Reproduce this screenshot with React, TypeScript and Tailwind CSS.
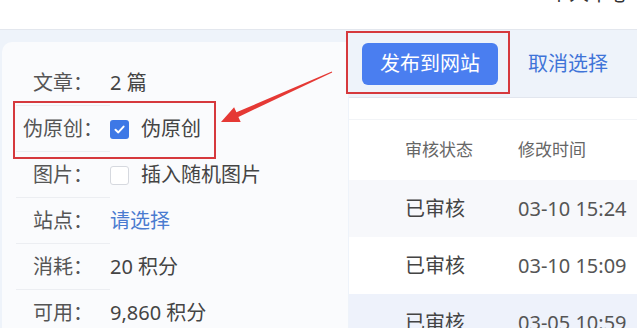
import React from "react";

const font = { fontFamily: '"Noto Sans", "Noto Sans CJK SC", sans-serif' };

function Row({ label, children }: { label: string; children: React.ReactNode }) {
  return (
    <div className="flex h-[46px] items-center">
      <div className="ml-[14px] w-[94px] h-full flex items-center justify-center border-b border-[#eceef2] text-[20px] text-[#555]">
        {label}
      </div>
      <div className="flex-1 h-full flex items-center text-[20px] text-[#444]">{children}</div>
    </div>
  );
}

const rows = [
  { status: "已审核", time: "03-10 15:24", bg: "bg-[#f7f8fb]" },
  { status: "已审核", time: "03-10 15:09", bg: "bg-white" },
  { status: "已审核", time: "03-05 10:59", bg: "bg-[#eef2fb]" },
];

export default function App() {
  return (
    <div className="w-[637px] h-[328px] overflow-hidden relative bg-[#eef3fa]" style={font}>
      {/* top bar */}
      <div className="h-[30px] bg-white border-b border-[#e3e7ee] flex justify-end pr-[8px]">
        <span className="text-[20px] leading-none text-[#333] -mt-[16px]">个人中心</span>
      </div>

      <div className="flex h-[298px]">
        {/* left side panel */}
        <div className="w-[348px] shrink-0 pl-[2px] pt-[12px]">
          <div className="h-full bg-[#fafbfd] rounded-tl-[10px] pt-[18px]">
            <Row label="文章：">2 篇</Row>
            <Row label="伪原创：">
              <span className="w-[19px] h-[19px] rounded-[3px] bg-[#3d78e6] flex items-center justify-center mr-[12px]">
                <svg width="13" height="13" viewBox="0 0 13 13">
                  <path d="M2.5 6.8 L5.3 9.4 L10.6 3.6" stroke="white" strokeWidth="2" fill="none" strokeLinecap="round" strokeLinejoin="round" />
                </svg>
              </span>
              伪原创
            </Row>
            <Row label="图片：">
              <span className="w-[19px] h-[19px] rounded-[3px] bg-white border border-[#d6d9df] mr-[12px]" />
              插入随机图片
            </Row>
            <Row label="站点：">
              <span className="text-[#4a7bd0]">请选择</span>
            </Row>
            <Row label="消耗：">20 积分</Row>
            <Row label="可用：">9,860 积分</Row>
          </div>
        </div>

        {/* right content */}
        <div className="flex-1 flex flex-col min-h-0">
          <div className="h-[67px] shrink-0 flex items-center pl-[14px] gap-[30px]">
            <button className="w-[136px] h-[42px] rounded-[6px] bg-[#4a7ef0] text-white text-[20px]">发布到网站</button>
            <span className="text-[20px] text-[#3f74d8]">取消选择</span>
          </div>
          <div className="flex-1 min-h-0 overflow-hidden bg-white border-t border-[#e2e6ee] ml-px">
            <div className="h-[22px] border-b border-[#f2f4f7]" />
            <div className="h-[60px] flex items-center pl-[56px] text-[17px] text-[#666]">
              <span className="w-[113px]">审核状态</span>
              <span>修改时间</span>
            </div>
            {rows.map((r, i) => (
              <div key={i} className={`h-[57px] flex items-center pl-[56px] text-[20px] ${r.bg}`}>
                <span className="w-[113px] text-[#444]">{r.status}</span>
                <span className="text-[#555] whitespace-nowrap">{r.time}</span>
              </div>
            ))}
          </div>
        </div>
      </div>

      {/* annotations */}
      <div className="absolute left-[13px] top-[101px] w-[203px] h-[58px] border-2 border-[#d6393d] pointer-events-none" />
      <div className="absolute left-[346px] top-[31px] w-[164px] h-[63px] border-2 border-[#d6393d] pointer-events-none" />
      <svg className="absolute left-0 top-0 pointer-events-none" width="637" height="328">
        <polygon
          points="221,122 240.7,121.9 238.4,116.9 332.2,72.6 331.8,71.4 236.4,112.3 234.1,107.3"
          fill="#e53935"
        />
      </svg>
    </div>
  );
}
